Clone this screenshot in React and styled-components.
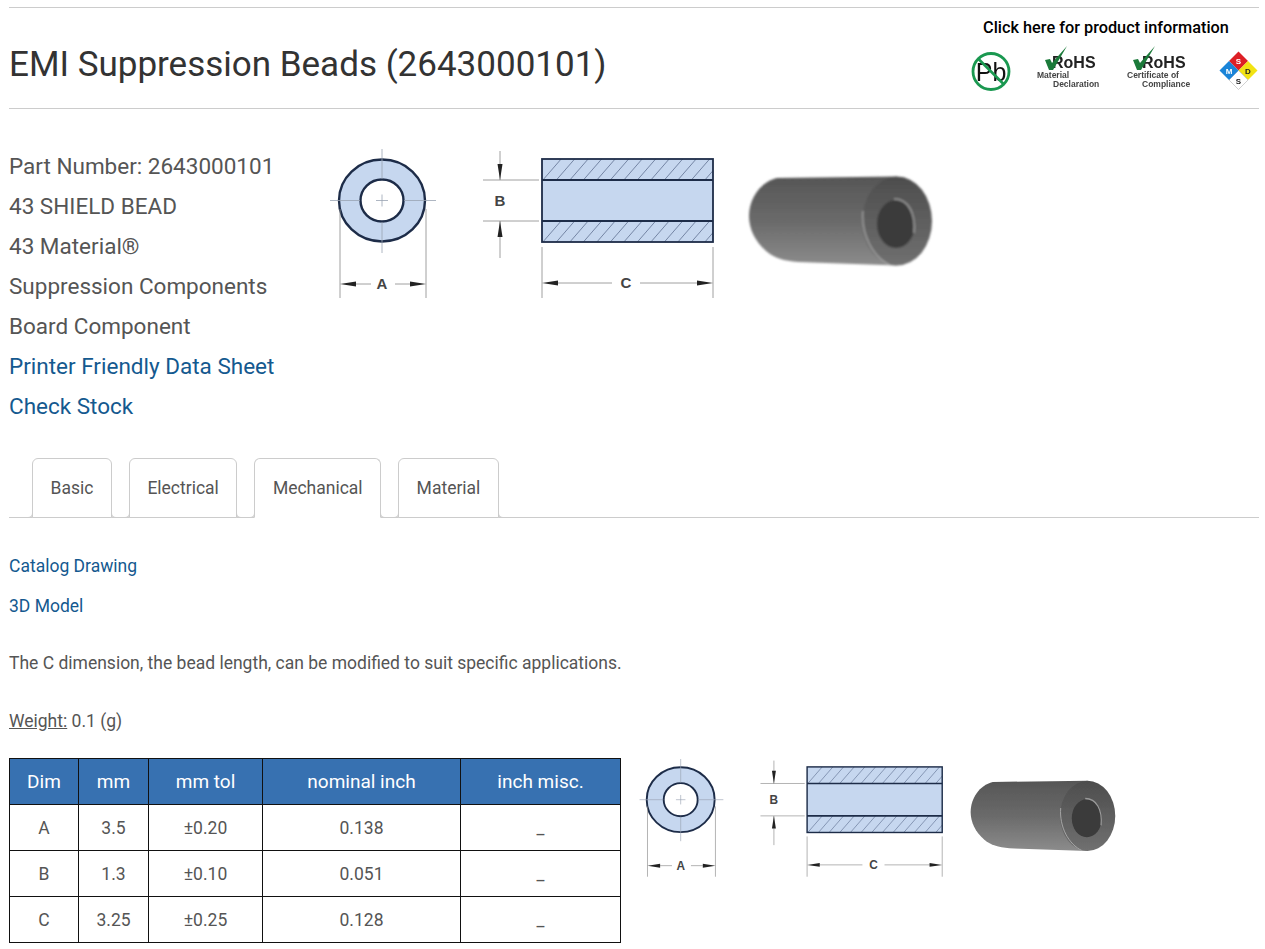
import React from "react";
import styled, { createGlobalStyle } from "styled-components";

const GlobalStyle = createGlobalStyle`
  html, body {
    margin: 0;
    padding: 0;
    background: #fff;
  }
  body {
    font-family: Roboto, "Liberation Sans", sans-serif;
    color: #555;
    overflow: hidden;
  }
`;

const Page = styled.div`
  padding: 7px 6px 0 9px;
`;

const Header = styled.header`
  display: flex;
  justify-content: space-between;
  height: 100px;
  border-top: 1px solid #ccc;
  border-bottom: 1px solid #ccc;
`;

const Title = styled.h1`
  margin: 0;
  padding-top: 35px;
  font-size: 35px;
  line-height: 44px;
  font-weight: 400;
  color: #333;
`;

const Certs = styled.div`
  width: 288px;
  display: flex;
  flex-direction: column;
`;

const CertsLabel = styled.div`
  padding: 10px 18px 0 0;
  font-size: 16.3px;
  line-height: 20px;
  font-weight: 500;
  color: #000;
  text-align: center;
`;

const CertIcons = styled.div`
  display: flex;
  justify-content: space-between;
  padding-top: 8px;
  svg {
    display: block;
    filter: blur(0.4px);
  }
`;

const Overview = styled.section`
  display: flex;
  align-items: flex-start;
  padding-top: 37px;
`;

const InfoList = styled.div`
  width: 319px;
  flex: none;
`;

const InfoLine = styled.div`
  font-size: 22.5px;
  line-height: 40px;
  white-space: nowrap;
`;

const InfoLink = styled.a`
  display: block;
  font-size: 22.5px;
  line-height: 40px;
  color: #14598f;
  text-decoration: none;
  white-space: nowrap;
`;

const DrawingBox = styled.div`
  padding-top: 3px;
  line-height: 0;
`;

const Tabs = styled.nav`
  display: flex;
  gap: 17px;
  margin-top: 32px;
  padding-left: 23px;
  height: 60px;
  border-bottom: 1px solid #ccc;
  box-sizing: border-box;
`;

const Tab = styled.div`
  position: relative;
  height: 60px;
  padding: 0 17.5px;
  box-sizing: border-box;
  border: 1px solid #ccc;
  border-bottom: 1px solid ${(p) => (p.$active ? "#fff" : "#ccc")};
  border-radius: 6px 6px 0 0;
  background: #fff;
  font-size: 17.5px;
  line-height: 58px;
  color: #555;

  &::before,
  &::after {
    content: "";
    position: absolute;
    bottom: -1px;
    width: 5px;
    height: 5px;
    border-bottom: 1px solid #ccc;
  }
  &::before {
    left: -6px;
    border-right: 1px solid #ccc;
    border-bottom-right-radius: 5px;
  }
  &::after {
    right: -6px;
    border-left: 1px solid #ccc;
    border-bottom-left-radius: 5px;
  }
`;

const Links = styled.div`
  padding-top: 28px;
`;

const SmallLink = styled.a`
  display: block;
  font-size: 17.5px;
  line-height: 40px;
  color: #14598f;
  text-decoration: none;
`;

const Note = styled.p`
  margin: 0;
  padding-top: 17px;
  font-size: 17.5px;
  line-height: 40px;
`;

const Weight = styled.p`
  margin: 0;
  padding-top: 18px;
  font-size: 17.5px;
  line-height: 40px;
`;

const Underlined = styled.span`
  text-decoration: underline;
`;

const DimRow = styled.section`
  display: flex;
  align-items: flex-start;
  margin-top: 17px;
`;

const DimTable = styled.table`
  width: 612px;
  flex: none;
  table-layout: fixed;
  border-collapse: collapse;
  font-size: 17.5px;
`;

const HeadCell = styled.th`
  height: 45px;
  padding: 0;
  border: 1px solid #111;
  background: #3771b1;
  color: #fff;
  font-size: 19px;
  font-weight: 400;
  text-align: center;
`;

const Cell = styled.td`
  height: 45px;
  padding: 0;
  border: 1px solid #111;
  color: #555;
  text-align: center;
`;

const SmallDrawing = styled.div`
  margin: 1px 0 0 17px;
  line-height: 0;
`;

const colWidths = [69, 70, 114, 198, 160];
const headers = ["Dim", "mm", "mm tol", "nominal inch", "inch misc."];
const rows = [
  ["A", "3.5", "±0.20", "0.138", "_"],
  ["B", "1.3", "±0.10", "0.051", "_"],
  ["C", "3.25", "±0.25", "0.128", "_"],
];

const ink = "#1d2c48";
const fill = "#c6d7ef";
const dim = "#888";

const Arrow = ({ x, y, dir }) => {
  const pts = {
    left: `${x},${y} ${x + 16},${y - 2.5} ${x + 16},${y + 2.5}`,
    right: `${x},${y} ${x - 16},${y - 2.5} ${x - 16},${y + 2.5}`,
    down: `${x},${y} ${x - 2.5},${y - 16} ${x + 2.5},${y - 16}`,
    up: `${x},${y} ${x - 2.5},${y + 16} ${x + 2.5},${y + 16}`,
  };
  return <polygon points={pts[dir]} fill="#222" />;
};

const DimLabel = ({ x, y, children }) => (
  <text
    x={x}
    y={y}
    textAnchor="middle"
    fontFamily="Liberation Sans, sans-serif"
    fontWeight="700"
    fontSize="15"
    fill="#444"
  >
    {children}
  </text>
);

// the catalog picture: end view, cross section and photo of the bead
const BeadDrawing = ({ id, width }) => {
  const hatch = [];
  for (let x = 214; x < 400; x += 13.5) {
    hatch.push(<line key={x} x1={x} y1="32" x2={x + 20} y2="9" />);
    hatch.push(<line key={x + "b"} x1={x} y1="94" x2={x + 20} y2="71" />);
  }
  return (
    <svg width={width} height={width * (155 / 610)} viewBox="0 0 610 155">
      <defs>
        <linearGradient id={`${id}-body`} x1="0" y1="0" x2="0" y2="1">
          <stop offset="0" stopColor="#565656" />
          <stop offset="0.5" stopColor="#6a6a6a" />
          <stop offset="1" stopColor="#8c8c8c" />
        </linearGradient>
        <linearGradient id={`${id}-face`} x1="0" y1="0" x2="0" y2="1">
          <stop offset="0" stopColor="#4d4d4d" />
          <stop offset="1" stopColor="#707070" />
        </linearGradient>
        <filter id={`${id}-soft`} x="-5%" y="-5%" width="110%" height="110%">
          <feGaussianBlur stdDeviation="0.8" />
        </filter>
        <clipPath id={`${id}-hatch`}>
          <rect x="214" y="10" width="171" height="21" />
          <rect x="214" y="72" width="171" height="21" />
        </clipPath>
      </defs>

      {/* end view */}
      <ellipse cx="54" cy="51.5" rx="43" ry="41" fill={fill} stroke={ink} strokeWidth="2.4" />
      <ellipse cx="54" cy="51.5" rx="21.5" ry="21" fill="#fff" stroke={ink} strokeWidth="2.4" />
      <g stroke="#99a3b3" strokeWidth="0.8">
        <line x1="2" y1="51.5" x2="32" y2="51.5" />
        <line x1="48" y1="51.5" x2="60" y2="51.5" />
        <line x1="76" y1="51.5" x2="108" y2="51.5" />
        <line x1="54" y1="0" x2="54" y2="30" />
        <line x1="54" y1="45.5" x2="54" y2="57.5" />
        <line x1="54" y1="73" x2="54" y2="104" />
      </g>
      <g stroke={dim} strokeWidth="0.8">
        <line x1="12" y1="60" x2="12" y2="149" />
        <line x1="98" y1="60" x2="98" y2="149" />
        <line x1="28" y1="135" x2="43" y2="135" />
        <line x1="67" y1="135" x2="82" y2="135" />
      </g>
      <Arrow x={12} y={135} dir="left" />
      <Arrow x={98} y={135} dir="right" />
      <DimLabel x={54} y={140}>A</DimLabel>

      {/* cross section */}
      <rect x="214" y="10" width="171" height="83" fill={fill} />
      <g clipPath={`url(#${id}-hatch)`} stroke="#6b7c9c" strokeWidth="0.9">
        {hatch}
      </g>
      <rect x="214" y="10" width="171" height="83" fill="none" stroke={ink} strokeWidth="1.8" />
      <line x1="214" y1="31" x2="385" y2="31" stroke={ink} strokeWidth="2" />
      <line x1="214" y1="72" x2="385" y2="72" stroke={ink} strokeWidth="2" />
      <g stroke={dim} strokeWidth="0.8">
        <line x1="155" y1="31" x2="211" y2="31" />
        <line x1="155" y1="72" x2="211" y2="72" />
        <line x1="172" y1="2" x2="172" y2="31" />
        <line x1="172" y1="72" x2="172" y2="109" />
        <line x1="214" y1="98" x2="214" y2="149" />
        <line x1="385" y1="98" x2="385" y2="149" />
        <line x1="230" y1="134" x2="284" y2="134" />
        <line x1="312" y1="134" x2="370" y2="134" />
      </g>
      <Arrow x={172} y={31} dir="down" />
      <Arrow x={172} y={72} dir="up" />
      <Arrow x={214} y={134} dir="left" />
      <Arrow x={385} y={134} dir="right" />
      <DimLabel x={172} y={57}>B</DimLabel>
      <DimLabel x={298} y={139}>C</DimLabel>

      {/* photo */}
      <g filter={`url(#${id}-soft)`}>
        <path
          d="M449 29 L569 27.5 L569 116.5 L470 113 C456 112 446 109 438 102 C427 92 421 80 421 67 C421 50 432 33 449 29 Z"
          fill={`url(#${id}-body)`}
        />
        <ellipse cx="569" cy="72" rx="35" ry="44.5" fill={`url(#${id}-face)`} />
        <path d="M535 62 C533 86 545 108 562 116" fill="none" stroke="#a8a8a8" strokeWidth="1.2" />
        <ellipse cx="568" cy="75" rx="19" ry="24" fill="#3a3a3a" />
        <path d="M566 50 C580 50 588 64 586 84" fill="none" stroke="#9a9a9a" strokeWidth="1.6" />
      </g>
    </svg>
  );
};

const LeadFreeIcon = () => (
  <svg width="40" height="46" viewBox="0 0 40 46">
    <text x="20" y="35" textAnchor="middle" fontFamily="Liberation Sans, sans-serif" fontSize="25" fill="#111">
      Pb
    </text>
    <circle cx="20" cy="25.5" r="18" fill="none" stroke="#1a9850" strokeWidth="2.8" />
    <line x1="7.5" y1="13" x2="32.5" y2="38" stroke="#1a9850" strokeWidth="2.6" />
  </svg>
);

const RohsIcon = ({ logoX, checkX, top, bottom, topX, bottomX }) => (
  <svg width="66" height="46" viewBox="0 0 66 46">
    <text x={logoX} y="22" fontFamily="Liberation Sans, sans-serif" fontWeight="700" fontSize="16" fill="#222">
      RoHS
    </text>
    <polygon
      transform={`translate(${checkX} 0)`}
      points="0,14 5,13 7,17 22,0 8,24 4,24"
      fill="#1b7a3a"
    />
    <text x={topX} y="32" fontFamily="Liberation Sans, sans-serif" fontWeight="700" fontSize="8.5" fill="#444">
      {top}
    </text>
    <text x={bottomX} y="41" fontFamily="Liberation Sans, sans-serif" fontWeight="700" fontSize="8.5" fill="#444">
      {bottom}
    </text>
  </svg>
);

const DiamondLetter = ({ x, y, color, children }) => (
  <text x={x} y={y} textAnchor="middle" fontFamily="Liberation Sans, sans-serif" fontWeight="700" fontSize="8" fill={color}>
    {children}
  </text>
);

const HazardIcon = () => (
  <svg width="41" height="46" viewBox="0 -4.5 41 46">
    <polygon points="20.5,1 30,10.5 20.5,20 11,10.5" fill="#dd1f26" />
    <polygon points="30,10.5 39.5,20 30,29.5 20.5,20" fill="#f2e313" />
    <polygon points="20.5,20 30,29.5 20.5,39 11,29.5" fill="#fff" stroke="#bbb" strokeWidth="0.7" />
    <polygon points="11,10.5 20.5,20 11,29.5 1.5,20" fill="#1a84d8" />
    <DiamondLetter x={20.5} y={13.5} color="#fff">S</DiamondLetter>
    <DiamondLetter x={30} y={23} color="#222">D</DiamondLetter>
    <DiamondLetter x={20.5} y={33} color="#222">S</DiamondLetter>
    <DiamondLetter x={11} y={23} color="#fff">M</DiamondLetter>
  </svg>
);

const App = () => (
  <Page>
    <GlobalStyle />
    <Header>
      <Title>EMI Suppression Beads (2643000101)</Title>
      <Certs>
        <CertsLabel>Click here for product information</CertsLabel>
        <CertIcons>
          <LeadFreeIcon />
          <RohsIcon logoX={16} checkX={9} top="Material" topX={1} bottom="Declaration" bottomX={17} />
          <RohsIcon logoX={15} checkX={6} top="Certificate of" topX={0} bottom="Compliance" bottomX={15} />
          <HazardIcon />
        </CertIcons>
      </Certs>
    </Header>

    <Overview>
      <InfoList>
        <InfoLine>Part Number: 2643000101</InfoLine>
        <InfoLine>43 SHIELD BEAD</InfoLine>
        <InfoLine>43 Material®</InfoLine>
        <InfoLine>Suppression Components</InfoLine>
        <InfoLine>Board Component</InfoLine>
        <InfoLink href="#">Printer Friendly Data Sheet</InfoLink>
        <InfoLink href="#">Check Stock</InfoLink>
      </InfoList>
      <DrawingBox>
        <BeadDrawing id="large" width={610} />
      </DrawingBox>
    </Overview>

    <Tabs>
      <Tab>Basic</Tab>
      <Tab>Electrical</Tab>
      <Tab $active>Mechanical</Tab>
      <Tab>Material</Tab>
    </Tabs>

    <Links>
      <SmallLink href="#">Catalog Drawing</SmallLink>
      <SmallLink href="#">3D Model</SmallLink>
    </Links>

    <Note>The C dimension, the bead length, can be modified to suit specific applications.</Note>
    <Weight>
      <Underlined>Weight:</Underlined> 0.1 (g)
    </Weight>

    <DimRow>
      <DimTable>
        <colgroup>
          {colWidths.map((w, i) => (
            <col key={i} style={{ width: w }} />
          ))}
        </colgroup>
        <thead>
          <tr>
            {headers.map((h) => (
              <HeadCell key={h}>{h}</HeadCell>
            ))}
          </tr>
        </thead>
        <tbody>
          {rows.map((row) => (
            <tr key={row[0]}>
              {row.map((v, i) => (
                <Cell key={i}>{v}</Cell>
              ))}
            </tr>
          ))}
        </tbody>
      </DimTable>
      <SmallDrawing>
        <BeadDrawing id="small" width={482} />
      </SmallDrawing>
    </DimRow>
  </Page>
);

export default App;
